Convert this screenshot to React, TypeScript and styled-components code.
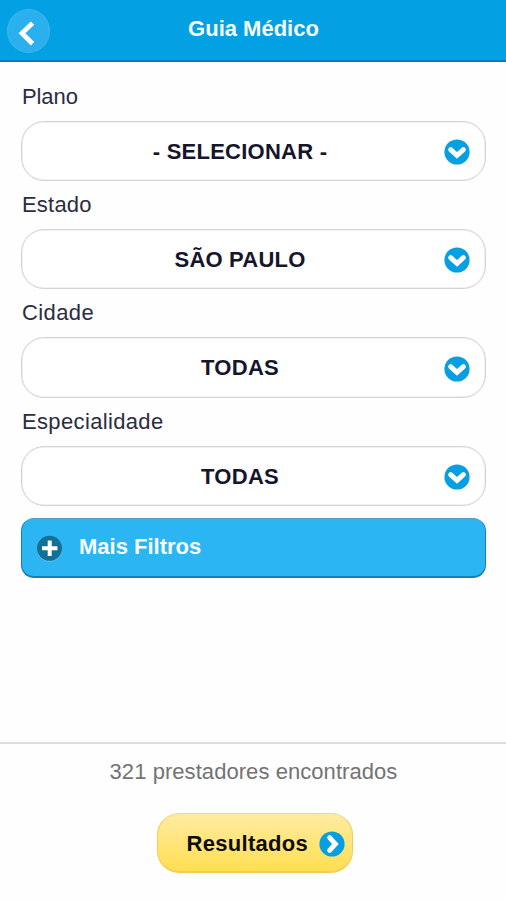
import React from "react";
import styled, { createGlobalStyle } from "styled-components";

const GlobalStyle = createGlobalStyle`
  * { box-sizing: border-box; }
  body {
    margin: 0;
    background: #fefefe;
    font-family: "Liberation Sans", Arial, sans-serif;
    font-size: 22px;
  }
  button { font: inherit; margin: 0; padding: 0; }
`;

const Screen = styled.div`
  display: flex;
  flex-direction: column;
  width: 506px;
  height: 900px;
  overflow: hidden;
`;

const Header = styled.header`
  flex: none;
  display: grid;
  grid-template-columns: 58px 1fr 58px;
  align-items: center;
  height: 62px;
  background: #03a1e4;
  border-bottom: 2px solid #087db8;
`;

const BackButton = styled.button`
  display: block;
  width: 43px;
  height: 44px;
  margin: 2px 0 0 7px;
  border: 1px solid #3eb4ea;
  border-radius: 50%;
  background: #2bb0ee;
  svg { display: block; width: 41px; height: 42px; }
`;

const Title = styled.h1`
  margin: 0 0 2px;
  padding-left: 1px;
  text-align: center;
  color: #f6fcff;
  font-size: 22px;
  line-height: 26px;
  font-weight: bold;
`;

const Form = styled.main`
  display: flex;
  flex-direction: column;
  flex: 1;
  padding: 21px 21px 0 21px;
`;

const Field = styled.div<{ $height: number }>`
  display: flex;
  flex-direction: column;
  height: ${(p) => p.$height}px;
`;

const Label = styled.label<{ $spacing: number }>`
  height: 38px;
  padding-left: 1px;
  color: #2c2c42;
  line-height: 28px;
  letter-spacing: ${(p) => p.$spacing}px;
`;

const SelectBox = styled.button<{ $height: number }>`
  display: grid;
  grid-template-columns: 1fr 26px;
  align-items: center;
  width: 465px;
  height: ${(p) => p.$height}px;
  padding: 0 15px 0 1px;
  border: 1.5px solid #d4d4d6;
  border-radius: 23px;
  background: #fff;
  box-shadow: inset 0 0 0 0.6px #e6e6e8;
  svg { display: block; width: 26px; height: 26px; margin-top: 2px; }
`;

const Value = styled.span<{ $spacing: number }>`
  padding: 1px 0 0 13px;
  text-align: center;
  color: #15152b;
  font-weight: bold;
  letter-spacing: ${(p) => p.$spacing}px;
`;

const MoreFilters = styled.button`
  display: flex;
  align-items: center;
  gap: 16px;
  width: 465px;
  height: 60px;
  padding: 0 0 1px 14px;
  border: 1.5px solid #167fb9;
  border-top-color: #579fc4;
  border-bottom-width: 2px;
  border-radius: 13px;
  background: #2cb5f3;
  color: #f7fcff;
  font-weight: bold;
  svg { display: block; width: 27px; height: 27px; margin-top: 2px; }
`;

const Footer = styled.footer`
  flex: none;
  display: flex;
  flex-direction: column;
  align-items: center;
  height: 158px;
  border-top: 2px solid #dedede;
`;

const Count = styled.p`
  margin: 15px 0 28px;
  padding-left: 1px;
  color: #737373;
  line-height: 26px;
  letter-spacing: 0.06px;
`;

const ResultsButton = styled.button`
  display: flex;
  align-items: center;
  justify-content: space-between;
  width: 196px;
  height: 60px;
  margin-left: 3px;
  padding: 0 7px 0 29px;
  border: 1.5px solid #f5cc54;
  border-top-color: #f5d582;
  border-bottom-width: 2px;
  border-radius: 22px;
  background: linear-gradient(#ffeba3, #ffdf50);
  color: #0d0d08;
  font-weight: bold;
  letter-spacing: 0.3px;
  svg { display: block; width: 26px; height: 26px; margin-top: 2px; }
`;

const ResultsText = styled.span`
  padding-top: 2px;
`;

const ChevronBadge = ({ turn = 0 }: { turn?: number }) => (
  <svg viewBox="0 0 26 26" aria-hidden="true">
    <circle cx="13" cy="13" r="12.6" fill="#069fe2" />
    <path
      d="M6.6 10.6L13 16.4L19.4 10.6"
      transform={`rotate(${turn} 13 13)`}
      fill="none"
      stroke="#fff"
      strokeWidth="4.9"
      strokeLinecap="round"
    />
  </svg>
);

const fields = [
  { label: "Plano", value: "- SELECIONAR -", height: 108, box: 60, ls: -0.1, vs: 0.25 },
  { label: "Estado", value: "SÃO PAULO", height: 108, box: 60, ls: 0.2, vs: 0.2 },
  { label: "Cidade", value: "TODAS", height: 109, box: 61, ls: 0.4, vs: 0.3 },
  { label: "Especialidade", value: "TODAS", height: 110, box: 60, ls: 0.35, vs: 0.3 },
];

export default function App() {
  return (
    <>
      <GlobalStyle />
      <Screen>
        <Header>
          <BackButton aria-label="Voltar">
            <svg viewBox="0 0 41 42" aria-hidden="true">
              <path
                d="M22.8 14.8L14 23.3L22.8 32"
                fill="none"
                stroke="#fff"
                strokeWidth="4.8"
                strokeLinecap="square"
              />
            </svg>
          </BackButton>
          <Title>Guia Médico</Title>
        </Header>
        <Form>
          {fields.map((f) => (
            <Field key={f.label} $height={f.height}>
              <Label $spacing={f.ls}>{f.label}</Label>
              <SelectBox $height={f.box}>
                <Value $spacing={f.vs}>{f.value}</Value>
                <ChevronBadge />
              </SelectBox>
            </Field>
          ))}
          <MoreFilters>
            <svg viewBox="0 0 27 27" aria-hidden="true">
              <circle cx="13.5" cy="14.3" r="12.3" fill="#71c9ef" />
              <circle cx="13.5" cy="13.3" r="12.5" fill="#126f96" />
              <path d="M6 13.3H21.4M13.7 5.6V21" stroke="#fff" strokeWidth="4" />
            </svg>
            Mais Filtros
          </MoreFilters>
        </Form>
        <Footer>
          <Count>321 prestadores encontrados</Count>
          <ResultsButton>
            <ResultsText>Resultados</ResultsText>
            <ChevronBadge turn={-90} />
          </ResultsButton>
        </Footer>
      </Screen>
    </>
  );
}
